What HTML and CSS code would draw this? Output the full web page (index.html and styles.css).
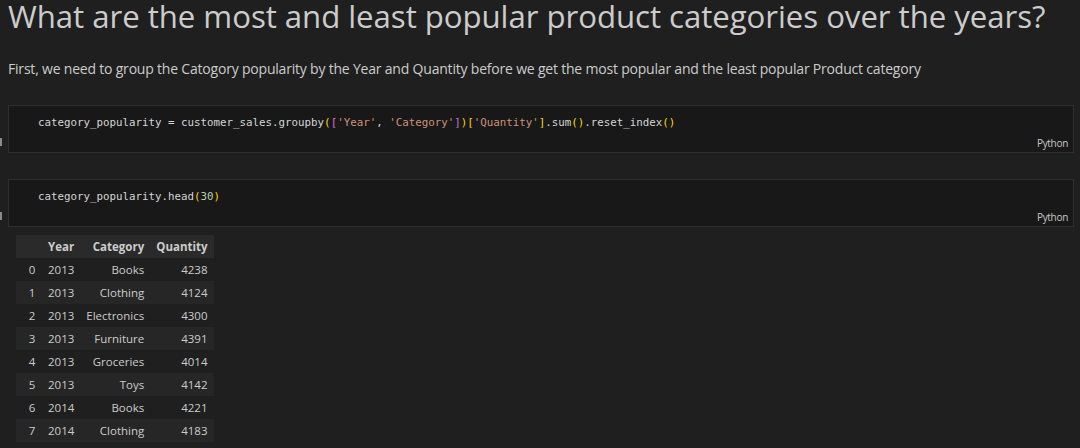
FILE: index.html
```html
<!DOCTYPE html>
<html>
<head>
<meta charset="utf-8">
<link rel="stylesheet" href="styles.css">
</head>
<body>
<div class="page">
  <h1 class="title">What are the most and least popular product categories over the years?</h1>
  <p class="para">First, we need to group the Catogory popularity by the Year and Quantity before we get the most popular and the least popular Product category</p>

  <div class="cell-wrap">
    <span class="marker"></span>
    <div class="cell">
      <div class="code"><span class="v">category_popularity</span> <span class="op">=</span> <span class="v">customer_sales</span>.<span class="v">groupby</span><span class="b1">(</span><span class="b2">[</span><span class="s">'Year'</span>, <span class="s">'Category'</span><span class="b2">]</span><span class="b1">)</span><span class="b1">[</span><span class="s">'Quantity'</span><span class="b1">]</span>.<span class="v">sum</span><span class="b1">()</span>.<span class="v">reset_index</span><span class="b1">()</span></div>
      <div class="lang">Python</div>
    </div>
  </div>

  <div class="cell-wrap second">
    <span class="marker"></span>
    <div class="cell">
      <div class="code"><span class="v">category_popularity</span>.<span class="v">head</span><span class="b1">(</span><span class="n">30</span><span class="b1">)</span></div>
      <div class="lang">Python</div>
    </div>
  </div>

  <table class="df">
    <thead>
      <tr><th></th><th>Year</th><th>Category</th><th>Quantity</th></tr>
    </thead>
    <tbody>
      <tr><td>0</td><td class="yr">2013</td><td>Books</td><td>4238</td></tr>
      <tr><td>1</td><td class="yr">2013</td><td>Clothing</td><td>4124</td></tr>
      <tr><td>2</td><td class="yr">2013</td><td>Electronics</td><td>4300</td></tr>
      <tr><td>3</td><td class="yr">2013</td><td>Furniture</td><td>4391</td></tr>
      <tr><td>4</td><td class="yr">2013</td><td>Groceries</td><td>4014</td></tr>
      <tr><td>5</td><td class="yr">2013</td><td>Toys</td><td>4142</td></tr>
      <tr><td>6</td><td class="yr">2014</td><td>Books</td><td>4221</td></tr>
      <tr><td>7</td><td class="yr">2014</td><td>Clothing</td><td>4183</td></tr>
    </tbody>
  </table>
</div>
</body>
</html>
```

FILE: styles.css
```css
html, body {
  margin: 0;
  padding: 0;
  background: #1f1f1f;
  overflow: hidden;
}
body {
  width: 1080px;
  height: 448px;
  font-family: "Open Sans", "Noto Sans", sans-serif;
  color: #cccccc;
}
.page {
  display: flex;
  flex-direction: column;
  align-items: flex-start;
}
.title {
  margin: 0 0 0 8px;
  font-weight: 400;
  font-size: 31.2px;
  line-height: 32px;
  color: #cccccc;
  white-space: nowrap;
  letter-spacing: -0.05px;
}
.para {
  margin: 27px 0 0 8px;
  font-size: 14px;
  line-height: 20px;
  color: #cccccc;
  white-space: nowrap;
  letter-spacing: -0.2px;
}
.cell-wrap {
  position: relative;
  margin-top: 26px;
  padding-left: 8px;
  width: 1066px;
}
.cell-wrap.second {
  margin-top: 26px;
}
.marker {
  position: absolute;
  left: 0;
  top: 33px;
  width: 2px;
  height: 8px;
  background: #8a8a8a;
}
.cell {
  box-sizing: border-box;
  height: 48px;
  background: #181818;
  border: 1px solid #2e2e2e;
  display: flex;
  flex-direction: column;
  justify-content: space-between;
  padding: 10px 5px 2px 29px;
}
.code {
  font-family: "DejaVu Sans Mono", monospace;
  font-size: 10.8px;
  line-height: 14px;
  color: #d4d4d4;
  white-space: pre;
}
.code .s { color: #ce9178; }
.code .b1 { color: #ffd700; }
.code .b2 { color: #da70d6; }
.code .n { color: #b5cea8; }
.code .op { color: #d4d4d4; }
.lang {
  align-self: flex-end;
  font-size: 10px;
  line-height: 14px;
  color: #c8c8c8;
  letter-spacing: -0.3px;
}
.df {
  margin: 8px 0 0 16px;
  border-collapse: collapse;
  font-size: 11.5px;
  color: #cccccc;
}
.df th, .df td {
  height: 23px;
  padding: 0 6px;
  text-align: right;
  white-space: nowrap;
}
.df th {
  font-weight: 700;
  background: #2a2a2a;
}
.df th:first-child { width: 16px; }
.df td:first-child { text-align: center; padding: 0 4px 0 8px; }
.df td.yr, .df th:nth-child(2) { text-align: left; padding-left: 4px; }
.df tbody tr:nth-child(even) { background: #262626; }
```
